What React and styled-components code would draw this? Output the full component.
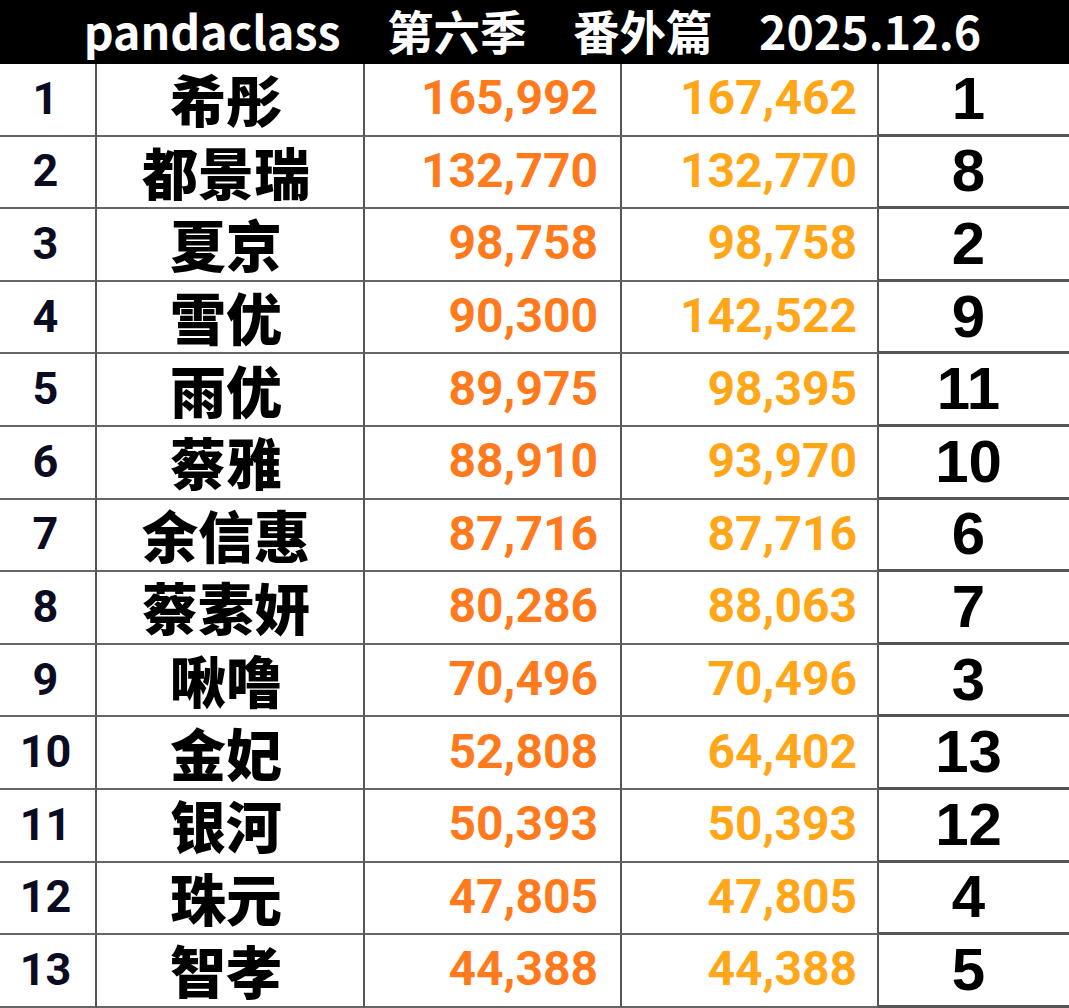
import React from 'react';
import styled, { createGlobalStyle } from 'styled-components';

const rows = [
  ['希彤', '165,992', '167,462', '1'],
  ['都景瑞', '132,770', '132,770', '8'],
  ['夏京', '98,758', '98,758', '2'],
  ['雪优', '90,300', '142,522', '9'],
  ['雨优', '89,975', '98,395', '11'],
  ['蔡雅', '88,910', '93,970', '10'],
  ['余信惠', '87,716', '87,716', '6'],
  ['蔡素妍', '80,286', '88,063', '7'],
  ['啾噜', '70,496', '70,496', '3'],
  ['金妃', '52,808', '64,402', '13'],
  ['银河', '50,393', '50,393', '12'],
  ['珠元', '47,805', '47,805', '4'],
  ['智孝', '44,388', '44,388', '5'],
];

const GlobalStyle = createGlobalStyle`
  html, body {
    margin: 0;
    padding: 0;
    background: #fff;
  }
  body {
    font-family: "Noto Sans CJK SC", "Noto Sans", sans-serif;
  }
`;

const Page = styled.div`
  width: 1069px;
  height: 1008px;
  overflow: hidden;
  background: #fff;
`;

const Header = styled.div`
  height: 64px;
  background: #000;
  color: #fff;
  display: flex;
  align-items: center;
  justify-content: center;
  overflow: hidden;
  font-family: "Noto Sans CJK SC", sans-serif;
  font-weight: 700;
  font-size: 46.5px;
  line-height: 60px;
  white-space: pre;
`;

const HeaderText = styled.span`
  margin-right: 4px;
  margin-top: -4px;
`;

const Table = styled.div`
  display: grid;
  grid-template-columns: 97px 268px 257px 257px 179px 1fr;
  grid-auto-rows: 72.6px;
`;

const Cell = styled.div`
  box-sizing: border-box;
  display: flex;
  align-items: center;
  justify-content: ${(p) => p.$align || 'center'};
  border-bottom: 2px solid #666;
  border-right: ${(p) => (p.$noRight ? 'none' : '2px solid #555')};
  padding-right: ${(p) => p.$pr || 0}px;
  padding-bottom: 2px;
  line-height: 1;
  white-space: nowrap;
`;

const Rank = styled(Cell)`
  font-family: Roboto, "Liberation Sans", sans-serif;
  font-weight: 700;
  font-size: 45px;
  color: #0b0b22;
  padding-right: 4px;
`;

const Name = styled(Cell)`
  font-family: "Noto Sans CJK SC", sans-serif;
  font-weight: 900;
  font-size: 56px;
  line-height: 60px;
  color: #000;
  padding-right: 8px;
`;

const Score = styled(Cell)`
  font-family: Roboto, "Liberation Sans", sans-serif;
  font-weight: 700;
  font-size: 48px;
  color: ${(p) => p.$color};
`;

const Place = styled(Cell)`
  font-family: "Liberation Sans", Arial, sans-serif;
  font-weight: 700;
  font-size: 60px;
  color: #000;
  border-bottom: 3px solid #555;
  padding-top: 2px;
`;

const Blank = styled(Cell)`
  border-bottom: 3px solid #555;
`;

export default function App() {
  return (
    <>
      <GlobalStyle />
      <Page>
        <Header>
          <HeaderText>pandaclass　第六季　番外篇　2025.12.6</HeaderText>
        </Header>
        <Table>
          {rows.map(([name, a, b, place], i) => (
            <React.Fragment key={name}>
              <Rank>{i + 1}</Rank>
              <Name>{name}</Name>
              <Score $align="flex-end" $pr={22} $color="#ff7a1c">
                {a}
              </Score>
              <Score $align="flex-end" $pr={20} $color="#ffa619">
                {b}
              </Score>
              <Place $noRight>{place}</Place>
              <Blank $noRight />
            </React.Fragment>
          ))}
        </Table>
      </Page>
    </>
  );
}
